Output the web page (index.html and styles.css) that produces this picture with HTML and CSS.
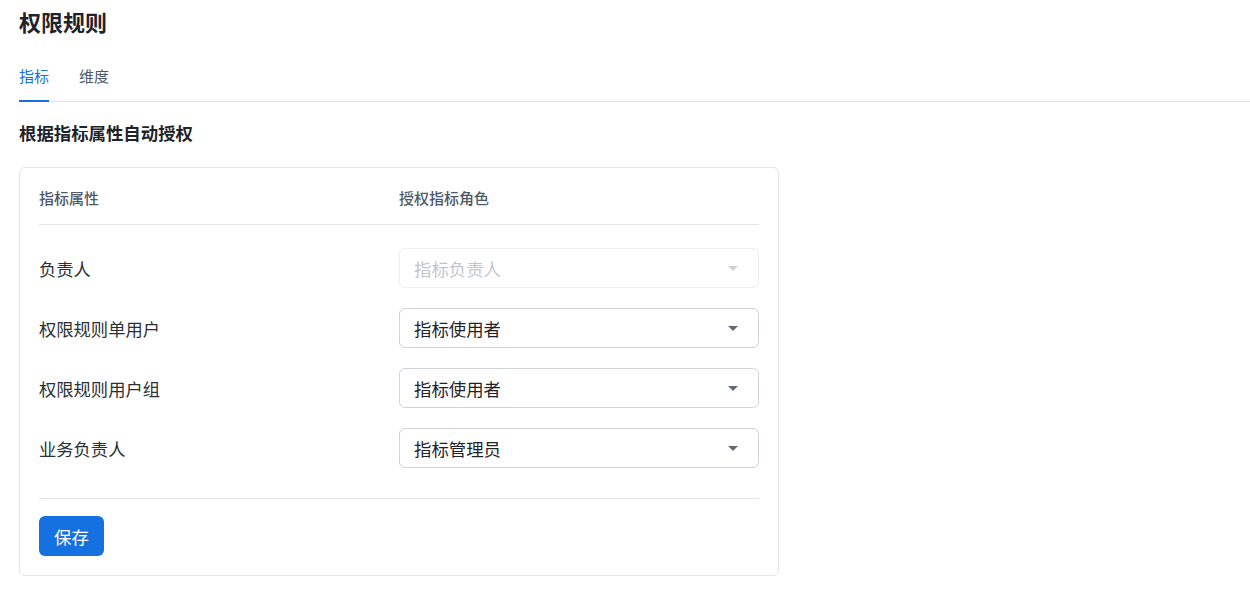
FILE: index.html
```html
<!DOCTYPE html>
<html lang="zh">
<head>
<meta charset="utf-8">
<link rel="stylesheet" href="styles.css">
</head>
<body>
<div class="page">
  <h1 class="title">权限规则</h1>
  <div class="tabs">
    <div class="tab active">指标</div>
    <div class="tab">维度</div>
  </div>
  <h2 class="section">根据指标属性自动授权</h2>
  <div class="card">
    <div class="head">
      <div class="col-a">指标属性</div>
      <div class="col-b">授权指标角色</div>
    </div>
    <div class="rows">
      <div class="row">
        <div class="col-a label">负责人</div>
        <div class="select disabled"><span>指标负责人</span><i class="arrow"></i></div>
      </div>
      <div class="row">
        <div class="col-a label">权限规则单用户</div>
        <div class="select"><span>指标使用者</span><i class="arrow"></i></div>
      </div>
      <div class="row">
        <div class="col-a label">权限规则用户组</div>
        <div class="select"><span>指标使用者</span><i class="arrow"></i></div>
      </div>
      <div class="row">
        <div class="col-a label">业务负责人</div>
        <div class="select"><span>指标管理员</span><i class="arrow"></i></div>
      </div>
    </div>
    <div class="foot">
      <button class="btn">保存</button>
    </div>
  </div>
</div>
</body>
</html>
```
FILE: styles.css
```css
* { box-sizing: border-box; }
body {
  margin: 0;
  background: #fff;
  font-family: "Inter", "Noto Sans CJK SC", sans-serif;
  color: #1f2329;
}
.page { padding: 9px 0 0 19px; }
.title {
  margin: 0;
  font-size: 22px;
  line-height: 28px;
  font-weight: 700;
  color: #1f2329;
}
.tabs {
  display: flex;
  gap: 30px;
  margin-top: 30px;
  border-bottom: 1px solid #e5e6eb;
}
.tab {
  font-size: 15px;
  line-height: 20px;
  padding-bottom: 13px;
  color: #4e5969;
  border-bottom: 2px solid transparent;
  margin-bottom: -1px;
}
.tab.active { color: #1570e0; border-bottom-color: #1570e0; }
.section {
  margin: 20px 0 0;
  font-size: 17.4px;
  line-height: 24px;
  font-weight: 600;
  color: #1f2329;
}
.card {
  margin-top: 21px;
  width: 760px;
  border: 1px solid #e5e6eb;
  border-radius: 6px;
  padding: 0 19px 19px;
}
.head {
  display: flex;
  align-items: center;
  height: 57px;
  border-bottom: 1px solid #e5e6eb;
  font-size: 15px;
  color: #4e5969;
  font-weight: 500;
  padding-top: 2px;
}
.col-a { width: 360px; flex: none; }
.rows {
  display: flex;
  flex-direction: column;
  gap: 20px;
  padding: 23px 0 30px;
  border-bottom: 1px solid #e5e6eb;
}
.row { display: flex; align-items: center; }
.label { font-size: 17.3px; color: #2b2f36; }
.select {
  width: 360px;
  height: 40px;
  border: 1px solid #d0d3d9;
  border-radius: 6px;
  display: flex;
  align-items: center;
  justify-content: space-between;
  padding: 0 20px 0 14px;
  font-size: 17.4px;
  color: #1f2329;
}
.select.disabled { border-color: #eceef1; color: #c2c6cc; }
.arrow {
  width: 0; height: 0;
  border-left: 5px solid transparent;
  border-right: 5px solid transparent;
  border-top: 5px solid #646a73;
}
.select.disabled .arrow { border-top-color: #d0d3d9; }
.foot { padding-top: 17px; }
.btn {
  height: 40px;
  width: 65px;
  border: none;
  border-radius: 6px;
  background: #1570e0;
  color: #fff;
  font-size: 17.4px;
  font-family: inherit;
  padding: 0;
}
```
